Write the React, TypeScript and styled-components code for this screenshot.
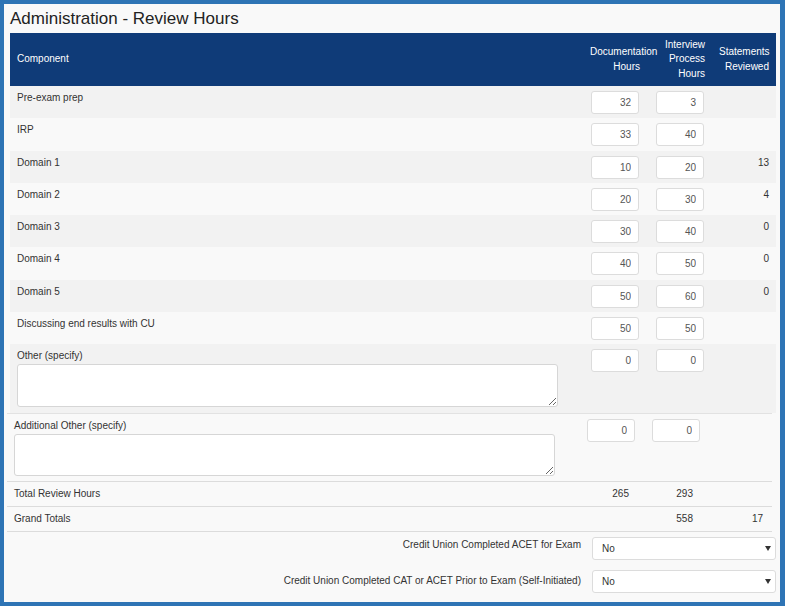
import React from 'react'
import styled, { createGlobalStyle } from 'styled-components'

const GlobalStyle = createGlobalStyle`
    html, body {
        margin: 0;
        padding: 0;
        background: #ffffff;
    }
    body {
        font-family: "Liberation Sans", Arial, sans-serif;
    }
    * {
        box-sizing: border-box;
    }
`

const Frame = styled.div`
    width: 785px;
    height: 606px;
    border-style: solid;
    border-color: #2e74b5;
    border-width: 4px 5px 4px 4px;
    background: #f9f9f9;
    padding: 0 4px 0 6px;
    display: flex;
    flex-direction: column;
    overflow: hidden;
    color: #333;
`

const Title = styled.h1`
    margin: 0;
    height: 29px;
    line-height: 29px;
    font-size: 17px;
    font-weight: normal;
    color: #222;
`

const COLUMNS = '1fr 64px 65px 64px'

const HeaderRow = styled.div`
    display: grid;
    grid-template-columns: ${COLUMNS};
    align-items: center;
    height: 53px;
    background: #0f3b78;
    color: #ffffff;
    font-size: 10px;
    line-height: 14.5px;
`

const HeadCell = styled.div<{ $right?: boolean }>`
    padding: 0 7px;
    text-align: ${(p) => (p.$right ? 'right' : 'left')};
`

const Row = styled.div<{ $shade?: boolean; $height?: number }>`
    display: grid;
    grid-template-columns: ${COLUMNS};
    height: ${(p) => (p.$height ? `${p.$height}px` : '32.25px')};
    background: ${(p) => (p.$shade ? '#f2f2f2' : 'transparent')};
    font-size: 10px;
    line-height: 12px;
`

const LabelCell = styled.div`
    padding: 6px 7px 0 7px;
`

const InputCell = styled.div<{ $left: number; $top?: number }>`
    padding-top: ${(p) => p.$top ?? 5}px;
    padding-left: ${(p) => p.$left}px;
`

const HourInput = styled.input`
    display: block;
    width: 48px;
    height: 23px;
    border: 1px solid #dcdcdc;
    border-radius: 3px;
    background: #ffffff;
    text-align: right;
    padding: 0 7px;
    font-family: "Liberation Sans", Arial, sans-serif;
    font-size: 10px;
    color: #555;
    outline: none;
`

const StatCell = styled.div<{ $pr?: number }>`
    padding: 6px ${(p) => p.$pr ?? 7}px 0 0;
    text-align: right;
`

const Notes = styled.textarea<{ $height: number }>`
    display: block;
    margin-top: 2px;
    width: 541px;
    height: ${(p) => p.$height}px;
    border: 1px solid #d6d6d6;
    border-radius: 3px;
    background: #ffffff;
    resize: both;
    font-family: "Liberation Sans", Arial, sans-serif;
    font-size: 10px;
    outline: none;
`

const Lower = styled.div`
    margin: 0 4px 0 -3px;
    border-top: 1px solid #e2e2e2;
    border-bottom: 1px solid #dcdcdc;
`

const TotalRow = styled.div`
    display: grid;
    grid-template-columns: ${COLUMNS};
    align-items: center;
    height: 25px;
    border-top: 1px solid #dcdcdc;
    font-size: 10px;
    line-height: 12px;
`

const TotalLabel = styled.div`
    padding-left: 7px;
`

const TotalValue = styled.div<{ $pr: number }>`
    text-align: right;
    padding-right: ${(p) => p.$pr}px;
`

const Options = styled.div`
    padding-top: 5px;
    display: flex;
    flex-direction: column;
    gap: 10px;
`

const OptionRow = styled.div`
    display: grid;
    grid-template-columns: 1fr 184px;
    column-gap: 11px;
    font-size: 10px;
    line-height: 12px;
`

const OptionLabel = styled.div<{ $top: number }>`
    text-align: right;
    padding-top: ${(p) => p.$top}px;
`

const SelectBox = styled.div`
    display: flex;
    align-items: center;
    justify-content: space-between;
    height: 23px;
    padding: 0 4px 0 9px;
    border: 1px solid #dcdcdc;
    border-radius: 3px;
    background: #ffffff;
    color: #333;
`

const Caret = () => (
    <svg width="6" height="5" viewBox="0 0 6 5">
        <path d="M0 0 H6 L3 5 Z" fill="#333" />
    </svg>
)

interface IHoursRow {
    label: string
    doc: number
    interview: number
    statements?: number
}

const rows: IHoursRow[] = [
    { label: 'Pre-exam prep', doc: 32, interview: 3 },
    { label: 'IRP', doc: 33, interview: 40 },
    { label: 'Domain 1', doc: 10, interview: 20, statements: 13 },
    { label: 'Domain 2', doc: 20, interview: 30, statements: 4 },
    { label: 'Domain 3', doc: 30, interview: 40, statements: 0 },
    { label: 'Domain 4', doc: 40, interview: 50, statements: 0 },
    { label: 'Domain 5', doc: 50, interview: 60, statements: 0 },
    { label: 'Discussing end results with CU', doc: 50, interview: 50 },
]

const App = () => {
    return (
        <>
            <GlobalStyle />
            <Frame>
                <Title>Administration - Review Hours</Title>
                <HeaderRow>
                    <HeadCell>Component</HeadCell>
                    <HeadCell $right>
                        Documentation
                        <br />
                        Hours
                    </HeadCell>
                    <HeadCell $right>
                        Interview
                        <br />
                        Process
                        <br />
                        Hours
                    </HeadCell>
                    <HeadCell $right>
                        Statements
                        <br />
                        Reviewed
                    </HeadCell>
                </HeaderRow>
                {rows.map((row, i) => (
                    <Row key={row.label} $shade={i % 2 === 0}>
                        <LabelCell>{row.label}</LabelCell>
                        <InputCell $left={8}>
                            <HourInput defaultValue={row.doc} />
                        </InputCell>
                        <InputCell $left={9}>
                            <HourInput defaultValue={row.interview} />
                        </InputCell>
                        <StatCell>{row.statements}</StatCell>
                    </Row>
                ))}
                <Row $shade $height={69}>
                    <LabelCell>
                        Other (specify)
                        <Notes $height={43} />
                    </LabelCell>
                    <InputCell $left={8}>
                        <HourInput defaultValue={0} />
                    </InputCell>
                    <InputCell $left={9}>
                        <HourInput defaultValue={0} />
                    </InputCell>
                    <StatCell />
                </Row>
                <Lower>
                    <Row $height={67}>
                        <LabelCell>
                            Additional Other (specify)
                            <Notes $height={42} />
                        </LabelCell>
                        <InputCell $left={8}>
                            <HourInput defaultValue={0} />
                        </InputCell>
                        <InputCell $left={9}>
                            <HourInput defaultValue={0} />
                        </InputCell>
                        <StatCell />
                    </Row>
                    <TotalRow>
                        <TotalLabel>Total Review Hours</TotalLabel>
                        <TotalValue $pr={14}>265</TotalValue>
                        <TotalValue $pr={15}>293</TotalValue>
                        <TotalValue $pr={9} />
                    </TotalRow>
                    <TotalRow>
                        <TotalLabel>Grand Totals</TotalLabel>
                        <TotalValue $pr={14} />
                        <TotalValue $pr={15}>558</TotalValue>
                        <TotalValue $pr={9}>17</TotalValue>
                    </TotalRow>
                </Lower>
                <Options>
                    <OptionRow>
                        <OptionLabel $top={2}>
                            Credit Union Completed ACET for Exam
                        </OptionLabel>
                        <SelectBox>
                            <span>No</span>
                            <Caret />
                        </SelectBox>
                    </OptionRow>
                    <OptionRow>
                        <OptionLabel $top={5}>
                            Credit Union Completed CAT or ACET Prior to Exam (Self-Initiated)
                        </OptionLabel>
                        <SelectBox>
                            <span>No</span>
                            <Caret />
                        </SelectBox>
                    </OptionRow>
                </Options>
            </Frame>
        </>
    )
}

export default App
